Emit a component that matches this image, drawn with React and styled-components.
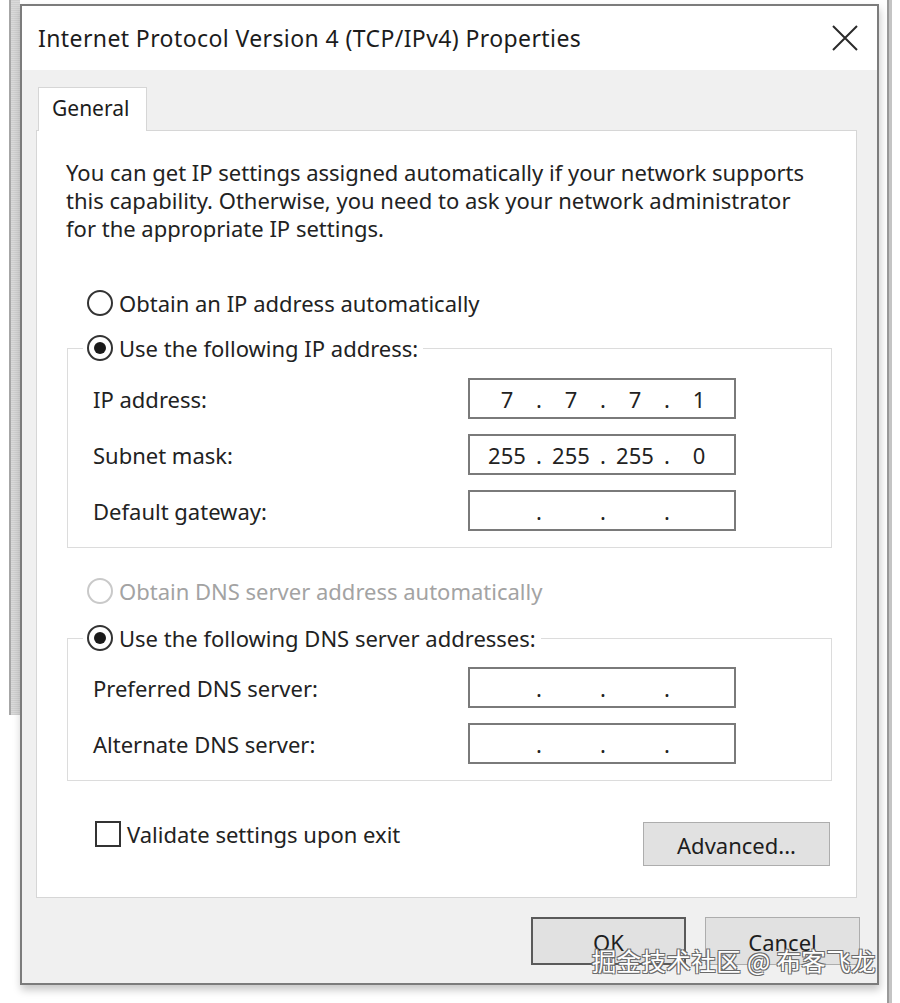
import React from 'react';
import styled, { createGlobalStyle, css } from 'styled-components';

const GlobalStyle = createGlobalStyle`
  html, body {
    margin: 0;
    padding: 0;
    background: #ffffff;
  }
  * {
    box-sizing: border-box;
  }
`;

const dlgFont = `"Noto Sans", "DejaVu Sans", sans-serif`;
const uiFont = `"Noto Sans", "Open Sans", sans-serif`;

const Screen = styled.div`
  width: 900px;
  height: 1003px;
  display: flex;
  align-items: flex-start;
  background: #fff;
  overflow: hidden;
`;

const BackEdge = styled.div`
  width: 20px;
  height: 715px;
  padding-left: 9px;
  div {
    width: 11px;
    height: 100%;
    background: repeating-linear-gradient(0deg, #cfcfcf 0 1px, #dadada 1px 2px);
    border-left: 2px solid #a6a6a6;
  }
`;

const RightEdge = styled.div`
  width: 21px;
  height: 1003px;
  padding-left: 8px;
  div {
    width: 5px;
    height: 100%;
    background: #c4c4c4;
    border-left: 2px solid #9a9a9a;
  }
`;

const Dialog = styled.div`
  position: relative;
  width: 859px;
  height: 981px;
  margin-top: 4px;
  border: 2px solid #7c7c7c;
  background: #f0f0f0;
  display: flex;
  flex-direction: column;
  box-shadow: 1px 5px 8px rgba(0, 0, 0, 0.22);
`;

const TitleBar = styled.div`
  height: 64px;
  flex: none;
  background: #fff;
  display: flex;
  align-items: center;
  justify-content: space-between;
  padding: 0 18px 0 16px;
`;

const Title = styled.div`
  font-family: ${uiFont};
  font-size: 23px;
  color: #1c1c1c;
  letter-spacing: 0.4px;
`;

const CloseButton = styled.div`
  width: 28px;
  height: 28px;
  display: flex;
  align-items: center;
  justify-content: center;
`;

const Body = styled.div`
  flex: 1;
  padding: 17px 20px 0 14px;
  display: flex;
  flex-direction: column;
  font-family: ${dlgFont};
  font-size: 22px;
  color: #222;
`;

const TabStrip = styled.div`
  display: flex;
  padding-left: 2px;
  height: 44px;
  margin-bottom: -1px;
`;

const Tab = styled.div`
  width: 109px;
  height: 44px;
  background: #fff;
  border: 1px solid #d6d6d6;
  border-bottom: none;
  position: relative;
  z-index: 1;
  display: flex;
  align-items: center;
  padding: 0 0 4px 13px;
  font-family: ${uiFont};
  font-size: 21px;
  color: #1c1c1c;
`;

const TabPanel = styled.div`
  height: 768px;
  background: #fff;
  border: 1px solid #d6d6d6;
  padding: 27px 24px 0 29px;
  display: flex;
  flex-direction: column;
`;

const Intro = styled.p`
  margin: 0;
  line-height: 28px;
  white-space: nowrap;
`;

const OptionRow = styled.label`
  display: flex;
  align-items: center;
  gap: 6px;
  height: 28px;
  margin-top: ${(p) => p.$top || 0}px;
  margin-left: ${(p) => (p.$inset === undefined ? 21 : p.$inset)}px;
  color: ${(p) => (p.$disabled ? '#a3a3a3' : '#222')};
  white-space: nowrap;
`;

const Radio = styled.span`
  width: 26px;
  height: 26px;
  flex: none;
  border-radius: 50%;
  border: 2px solid ${(p) => (p.$disabled ? '#c9c9c9' : '#333')};
  display: flex;
  align-items: center;
  justify-content: center;
  background: #fff;
  ${(p) =>
    p.$checked &&
    css`
      &::after {
        content: '';
        width: 12px;
        height: 12px;
        border-radius: 50%;
        background: #1a1a1a;
      }
    `}
`;

const Check = styled.span`
  width: 26px;
  height: 26px;
  flex: none;
  border: 2px solid #333;
  background: #fff;
`;

const Group = styled.fieldset`
  margin: ${(p) => p.$top}px 0 0 1px;
  width: 765px;
  border: 1px solid #dcdcdc;
  padding: 0 0 16px 25px;
  display: flex;
  flex-direction: column;
  gap: 15px;

  legend {
    padding: 0 5px 0 4px;
    margin-left: -10px;
    height: 28px;
  }
`;

const FieldRow = styled.div`
  display: flex;
  align-items: center;
  height: 41px;
  &:first-of-type {
    margin-top: ${(p) => p.$first || 16}px;
  }
`;

const FieldLabel = styled.span`
  width: 375px;
`;

const IpBox = styled.div`
  width: 268px;
  height: 41px;
  border: 2px solid #7a7a7a;
  background: #fff;
  display: flex;
  align-items: center;
  padding: 0 0 0 17px;
`;

const Octet = styled.span`
  width: 40px;
  text-align: center;
`;

const Dot = styled.span`
  width: 24px;
  text-align: center;
`;

const Footer = styled.div`
  display: flex;
  justify-content: space-between;
  align-items: flex-start;
  margin-top: 39px;
  padding-left: 29px;
  width: 764px;
`;

const Button = styled.div`
  width: ${(p) => p.$w}px;
  height: ${(p) => p.$h}px;
  margin-top: ${(p) => p.$top || 0}px;
  background: #e1e1e1;
  border: ${(p) => (p.$default ? '2px solid #5a5a5a' : '1px solid #adadad')};
  display: flex;
  align-items: center;
  justify-content: center;
  color: #1e1e1e;
  padding-top: 2px;
`;

const ButtonBar = styled.div`
  display: flex;
  justify-content: flex-end;
  gap: 19px;
  margin-top: 19px;
  margin-right: -3px;
`;

const Watermark = styled.div`
  position: absolute;
  right: 1px;
  bottom: 5px;
  font-family: "Noto Sans CJK SC", sans-serif;
  font-size: 24.5px;
  color: #fff;
  letter-spacing: 0.4px;
  text-shadow: -1px -1px 0 #6a6a6a, 1px -1px 0 #6a6a6a, -1px 1px 0 #6a6a6a, 1px 1px 0 #6a6a6a;
`;

const IpField = ({ value }) => {
  const parts = value || ['', '', '', ''];
  return (
    <IpBox>
      {parts.map((p, i) => (
        <React.Fragment key={i}>
          <Octet>{p}</Octet>
          {i < 3 && <Dot>.</Dot>}
        </React.Fragment>
      ))}
    </IpBox>
  );
};

const App = () => {
  return (
    <>
      <GlobalStyle />
      <Screen>
        <BackEdge><div /></BackEdge>
        <Dialog>
          <TitleBar>
            <Title>Internet Protocol Version 4 (TCP/IPv4) Properties</Title>
            <CloseButton>
              <svg width="26" height="26" viewBox="0 0 26 26">
                <path d="M1 1 L25 25 M25 1 L1 25" stroke="#2a2a2a" strokeWidth="2" fill="none" />
              </svg>
            </CloseButton>
          </TitleBar>
          <Body>
            <TabStrip>
              <Tab>General</Tab>
            </TabStrip>
            <TabPanel>
              <Intro>
                You can get IP settings assigned automatically if your network supports<br />
                this capability. Otherwise, you need to ask your network administrator<br />
                for the appropriate IP settings.
              </Intro>

              <OptionRow $top={47}>
                <Radio />
                Obtain an IP address automatically
              </OptionRow>

              <Group $top={17}>
                <legend>
                  <OptionRow $inset={0}>
                    <Radio $checked />
                    Use the following IP address:
                  </OptionRow>
                </legend>
                <FieldRow>
                  <FieldLabel>IP address:</FieldLabel>
                  <IpField value={['7', '7', '7', '1']} />
                </FieldRow>
                <FieldRow>
                  <FieldLabel>Subnet mask:</FieldLabel>
                  <IpField value={['255', '255', '255', '0']} />
                </FieldRow>
                <FieldRow>
                  <FieldLabel>Default gateway:</FieldLabel>
                  <IpField />
                </FieldRow>
              </Group>

              <OptionRow $top={29} $disabled>
                <Radio $disabled />
                Obtain DNS server address automatically
              </OptionRow>

              <Group $top={19}>
                <legend>
                  <OptionRow $inset={0}>
                    <Radio $checked />
                    Use the following DNS server addresses:
                  </OptionRow>
                </legend>
                <FieldRow $first={15}>
                  <FieldLabel>Preferred DNS server:</FieldLabel>
                  <IpField />
                </FieldRow>
                <FieldRow>
                  <FieldLabel>Alternate DNS server:</FieldLabel>
                  <IpField />
                </FieldRow>
              </Group>

              <Footer>
                <OptionRow $inset={0}>
                  <Check />
                  Validate settings upon exit
                </OptionRow>
                <Button $w={187} $h={44} $top={2}>Advanced...</Button>
              </Footer>
            </TabPanel>

            <ButtonBar>
              <Button $w={155} $h={48} $default>OK</Button>
              <Button $w={155} $h={48}>Cancel</Button>
            </ButtonBar>
          </Body>
          <Watermark>掘金技术社区 @ 布客飞龙</Watermark>
        </Dialog>
        <RightEdge><div /></RightEdge>
      </Screen>
    </>
  );
};

export default App;
